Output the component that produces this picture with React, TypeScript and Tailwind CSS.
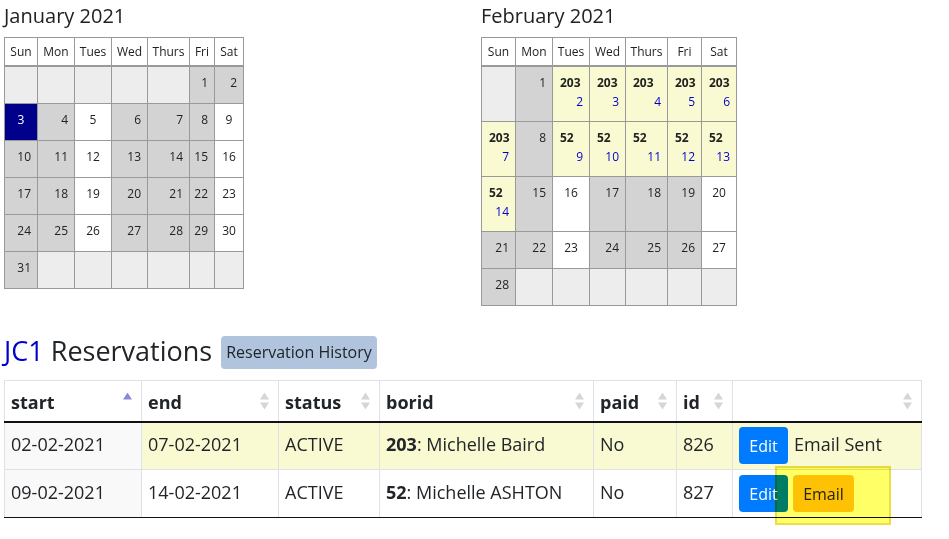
import React from "react";

type Cell =
  | { t: "empty" }
  | { t: "gray"; n: number }
  | { t: "white"; n: number }
  | { t: "navy"; n: number }
  | { t: "yellow"; label: string; n: number };

const E: Cell = { t: "empty" };
const g = (n: number): Cell => ({ t: "gray", n });
const w = (n: number): Cell => ({ t: "white", n });
const y = (label: string, n: number): Cell => ({ t: "yellow", label, n });

const DAYS = ["Sun", "Mon", "Tues", "Wed", "Thurs", "Fri", "Sat"];

const janRows: { tall: boolean; cells: Cell[] }[] = [
  { tall: false, cells: [E, E, E, E, E, g(1), g(2)] },
  { tall: false, cells: [{ t: "navy", n: 3 }, g(4), w(5), g(6), g(7), g(8), w(9)] },
  { tall: false, cells: [g(10), g(11), w(12), g(13), g(14), g(15), w(16)] },
  { tall: false, cells: [g(17), g(18), w(19), g(20), g(21), g(22), w(23)] },
  { tall: false, cells: [g(24), g(25), w(26), g(27), g(28), g(29), w(30)] },
  { tall: false, cells: [g(31), E, E, E, E, E, E] },
];

const febRows: { tall: boolean; cells: Cell[] }[] = [
  { tall: true, cells: [E, g(1), y("203", 2), y("203", 3), y("203", 4), y("203", 5), y("203", 6)] },
  { tall: true, cells: [y("203", 7), g(8), y("52", 9), y("52", 10), y("52", 11), y("52", 12), y("52", 13)] },
  { tall: true, cells: [y("52", 14), g(15), w(16), g(17), g(18), g(19), w(20)] },
  { tall: false, cells: [g(21), g(22), w(23), g(24), g(25), g(26), w(27)] },
  { tall: false, cells: [g(28), E, E, E, E, E, E] },
];

function DayCell({ c, tall }: { c: Cell; tall: boolean }) {
  const h = tall ? "h-[55px]" : "h-[37px]";
  const base = `${h} border-r border-b border-[#999] text-[12px]`;
  if (c.t === "empty") return <div className={`${base} bg-[#ededed]`} />;
  if (c.t === "gray")
    return (
      <div className={`${base} bg-[#d3d3d3] text-right pr-[6px] pt-[8px] leading-[16px] text-[#222]`}>{c.n}</div>
    );
  if (c.t === "white")
    return (
      <div className={`${base} bg-white text-center pt-[8px] leading-[16px] text-[#222]`}>{c.n}</div>
    );
  if (c.t === "navy")
    return (
      <div className={`${base} bg-[#00008b] text-center pt-[8px] leading-[16px] text-white`}>{c.n}</div>
    );
  return (
    <div className={`${base} bg-[#fafad2] pt-[6px] leading-[19px]`}>
      <div className="pl-[7px] font-bold text-[#222]">{c.label}</div>
      <div className="pr-[6px] text-right text-[#0000cd]">{c.n}</div>
    </div>
  );
}

function Calendar({
  title,
  gridCls,
  rows,
}: {
  title: string;
  gridCls: string;
  rows: { tall: boolean; cells: Cell[] }[];
}) {
  return (
    <div>
      <div className="h-[37px] pt-[3px] text-[20px] leading-[25px] text-[#222]">{title}</div>
      <div className={`grid ${gridCls} w-fit border-l border-t border-[#999]`}>
        {DAYS.map((d) => (
          <div
            key={d}
            className="h-[29px] border-r border-b-2 border-[#999] bg-white flex items-center justify-center text-[12px] text-[#222]"
          >
            {d}
          </div>
        ))}
        {rows.map((r, i) =>
          r.cells.map((c, j) => <DayCell key={`${i}-${j}`} c={c} tall={r.tall} />)
        )}
      </div>
    </div>
  );
}

function SortIcon({ active }: { active?: boolean }) {
  return (
    <svg
      className="absolute right-[9px] top-1/2 -translate-y-1/2"
      width="9"
      height="17"
      viewBox="0 0 9 17"
    >
      <polygon points="4.5,0 9,7 0,7" fill={active ? "#8a8ad6" : "#d6d6d6"} />
      {!active && <polygon points="0,10 9,10 4.5,17" fill="#d6d6d6" />}
    </svg>
  );
}

const headers = ["start", "end", "status", "borid", "paid", "id", ""];

const td1 = "px-[6px] pb-[3px] border border-[#dee2e6]";
const td2 = "px-[6px] pb-[3px] border border-[#dee2e6] border-b-[#111]";

export default function App() {
  return (
    <div className="relative w-[949px] h-[539px] overflow-hidden bg-white px-[4px] font-['Open_Sans',sans-serif] text-[#212529]">
      <div className="flex h-[306px]">
        <div className="w-[477px]">
          <Calendar
            title="January 2021"
            gridCls="grid-cols-[33px_37px_37px_36px_42px_25px_29px]"
            rows={janRows}
          />
        </div>
        <div>
          <Calendar
            title="February 2021"
            gridCls="grid-cols-[34px_37px_37px_36px_42px_34px_35px]"
            rows={febRows}
          />
        </div>
      </div>

      <div className="mt-[29px] flex items-center gap-[9px] h-[34px]">
        <div className="text-[27px] leading-[34px] pb-[2px]">
          <span className="text-[#0000cd]">JC1</span> <span className="text-[#212529]">Reservations</span>
        </div>
        <div className="h-[33px] px-[5px] rounded-[4px] bg-[#b0c4de] flex items-center text-[16px] text-[#212529]">
          Reservation History
        </div>
      </div>

      <table className="mt-[11px] table-fixed border-collapse w-[917px] text-[18px] border border-[#dee2e6]">
        <colgroup>
          <col className="w-[137px]" />
          <col className="w-[137px]" />
          <col className="w-[101px]" />
          <col className="w-[214px]" />
          <col className="w-[83px]" />
          <col className="w-[56px]" />
          <col className="w-[189px]" />
        </colgroup>
        <thead>
          <tr>
            {headers.map((h, i) => (
              <th
                key={i}
                className="relative h-[41px] px-[6px] pt-[3px] text-left font-bold border border-[#dee2e6] border-b-2 border-b-[#111] bg-white"
              >
                {h}
                <SortIcon active={i === 0} />
              </th>
            ))}
          </tr>
        </thead>
        <tbody>
          <tr>
            <td className={`h-[48px] ${td1} bg-[#f9f9f9]`}>02-02-2021</td>
            <td className={`${td1} bg-[#fafad2]`}>07-02-2021</td>
            <td className={`${td1} bg-[#fafad2]`}>ACTIVE</td>
            <td className={`${td1} bg-[#fafad2]`}>
              <b>203</b>: Michelle Baird
            </td>
            <td className={`${td1} bg-[#fafad2]`}>No</td>
            <td className={`${td1} bg-[#fafad2]`}>826</td>
            <td className="px-[6px] border border-[#dee2e6] bg-[#fafad2]">
              <div className="flex items-center gap-[6px]">
                <div className="w-[49px] h-[37px] rounded-[4px] bg-[#007bff] text-white text-[16px] flex items-center justify-center">
                  Edit
                </div>
                <span className="pb-[3px]">Email Sent</span>
              </div>
            </td>
          </tr>
          <tr>
            <td className={`h-[48px] ${td2} bg-[#f9f9f9]`}>09-02-2021</td>
            <td className={`${td2} bg-white`}>14-02-2021</td>
            <td className={`${td2} bg-white`}>ACTIVE</td>
            <td className={`${td2} bg-white`}>
              <b>52</b>: Michelle ASHTON
            </td>
            <td className={`${td2} bg-white`}>No</td>
            <td className={`${td2} bg-white`}>827</td>
            <td className="px-[6px] border border-[#dee2e6] border-b-[#111] bg-white">
              <div className="flex items-center gap-[5px]">
                <div className="w-[49px] h-[37px] rounded-[4px] bg-[#007bff] text-white text-[16px] flex items-center justify-center">
                  Edit
                </div>
                <div className="w-[61px] h-[37px] rounded-[4px] bg-[#ffc107] text-[#212529] text-[16px] flex items-center justify-center">
                  Email
                </div>
              </div>
            </td>
          </tr>
        </tbody>
      </table>

      <div className="absolute left-[775px] top-[466px] w-[116px] h-[59px] bg-[#ffff66] border-2 border-[#eedd44] mix-blend-multiply" />
    </div>
  );
}
